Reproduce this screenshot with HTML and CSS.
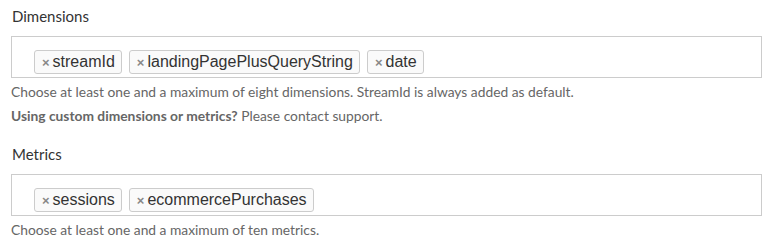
FILE: index.html
```html
<!DOCTYPE html>
<html lang="en">
<head>
  <meta charset="UTF-8">
  <title>Report fields</title>
  <link rel="stylesheet" href="styles.css">
</head>
<body>
  <div class="field-group">
    <label class="field-label">Dimensions</label>
    <div class="tag-select">
      <ul class="tag-list">
        <li class="tag"><span class="tag-remove">×</span>streamId</li>
        <li class="tag"><span class="tag-remove">×</span>landingPagePlusQueryString</li>
        <li class="tag"><span class="tag-remove">×</span>date</li>
      </ul>
    </div>
    <p class="help-text">Choose at least one and a maximum of eight dimensions. StreamId is always added as default.</p>
    <p class="help-text note"><strong>Using custom dimensions or metrics?</strong> Please contact support.</p>
  </div>

  <div class="field-group">
    <label class="field-label">Metrics</label>
    <div class="tag-select">
      <ul class="tag-list">
        <li class="tag"><span class="tag-remove">×</span>sessions</li>
        <li class="tag"><span class="tag-remove">×</span>ecommercePurchases</li>
      </ul>
    </div>
    <p class="help-text">Choose at least one and a maximum of ten metrics.</p>
  </div>
</body>
</html>
```

FILE: styles.css
```css
body {
  margin: 0;
  padding: 6px 7px 0 11px;
  background: #fff;
  font-family: Lato, "Open Sans", sans-serif;
  color: #333;
}

.field-group {
  margin-bottom: 19px;
}

.field-group:last-child {
  margin-bottom: 0;
}

.field-label {
  display: block;
  font-size: 15px;
  line-height: 20px;
  margin: 0 0 10px 1px;
  color: #333;
}

.tag-select {
  border: 1px solid #ccc;
  background: #fff;
  height: 40px;
  box-sizing: content-box;
}

.tag-list {
  list-style: none;
  margin: 0;
  padding: 13px 0 0 22px;
  display: flex;
  gap: 7px;
}

.tag {
  display: flex;
  align-items: center;
  height: 22px;
  padding: 0 6px 0 7px;
  border: 1px solid #ccc;
  border-radius: 3px;
  background: #fafafa;
  font-family: "Liberation Sans", Arial, sans-serif;
  font-size: 16px;
  color: #333;
}

.tag-remove {
  font-size: 13px;
  color: #888;
  margin-right: 3px;
  font-weight: bold;
}

.help-text {
  margin: 5px 0 0 0;
  font-size: 13.8px;
  line-height: 18px;
  color: #666;
}

.help-text.note {
  margin-top: 6px;
}

.help-text strong {
  font-weight: bold;
}
```
